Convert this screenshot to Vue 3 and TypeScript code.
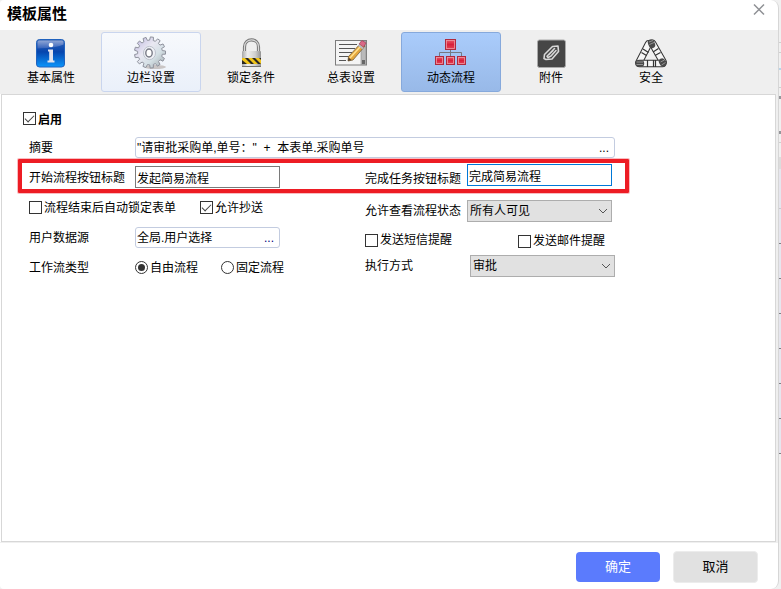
<script setup lang="ts">
import { ref } from 'vue'

interface Tab {
  id: string
  label: string
}

const tabs: Tab[] = [
  { id: 'basic', label: '基本属性' },
  { id: 'sidebar', label: '边栏设置' },
  { id: 'lock', label: '锁定条件' },
  { id: 'summary', label: '总表设置' },
  { id: 'flow', label: '动态流程' },
  { id: 'attach', label: '附件' },
  { id: 'security', label: '安全' },
]

const active = ref('flow')
const hovered = ref('sidebar')

const enabled = ref(true)
const summary = ref('"请审批采购单,单号："  +  本表单.采购单号')
const startTitle = ref('发起简易流程')
const finishTitle = ref('完成简易流程')
const autoLock = ref(false)
const allowCopy = ref(true)
const visibility = ref('所有人可见')
const userSource = ref('全局.用户选择')
const smsNotice = ref(false)
const mailNotice = ref(false)
const flowType = ref('free')
const execMode = ref('审批')

// Outline of a cog: each tooth is a flat-topped bump between two radii.
function gearPath(cx: number, cy: number, outer: number, inner: number, teeth: number): string {
  const step = (Math.PI * 2) / teeth
  const points: string[] = []
  for (let i = 0; i < teeth; i++) {
    const a = i * step
    const corners: [number, number][] = [
      [inner, -0.32],
      [outer, -0.2],
      [outer, 0.22],
      [inner, 0.3],
    ]
    for (const [r, t] of corners) {
      points.push(`${(cx + r * Math.cos(a + t * step)).toFixed(2)} ${(cy + r * Math.sin(a + t * step)).toFixed(2)}`)
    }
  }
  return `M${points.join('L')}Z`
}

const gear = gearPath(16, 16.5, 15.6, 12.4, 13)
const rowTicks = [243, 278, 313, 348, 383, 418, 453]
</script>

<template>
  <div class="desktop" lang="zh-CN">
    <div class="dialog" role="dialog" aria-labelledby="dialog-title">
      <header class="titlebar">
        <h1 id="dialog-title">模板属性</h1>
        <button class="close" type="button" aria-label="关闭">
          <svg width="13" height="13" viewBox="0 0 13 13">
            <path d="M1 1.5 11 11.5M11 1.5 1 11.5" fill="none" stroke="#8f9195" stroke-width="1.5" />
          </svg>
        </button>
      </header>

      <nav class="tabs">
        <button
          v-for="tab in tabs"
          :key="tab.id"
          type="button"
          class="tab"
          :class="{ active: active === tab.id, hovered: hovered === tab.id }"
          @click="active = tab.id"
          @mouseenter="hovered = tab.id"
        >
          <svg class="tab-icon" viewBox="0 0 34 34" aria-hidden="true">
            <template v-if="tab.id === 'basic'">
              <defs>
                <linearGradient id="infoBg" x1="0" y1="0" x2="0" y2="1">
                  <stop offset="0" stop-color="#3565b4" />
                  <stop offset="0.45" stop-color="#0645ae" />
                  <stop offset="1" stop-color="#0b96fb" />
                </linearGradient>
                <linearGradient id="infoGloss" x1="0" y1="0" x2="0" y2="1">
                  <stop offset="0" stop-color="#a7b6de" />
                  <stop offset="1" stop-color="#3b66bd" />
                </linearGradient>
              </defs>
              <rect x="2.5" y="3.5" width="28" height="27.5" rx="3" fill="url(#infoBg)" stroke="#2162bd" />
              <path d="M5 4.5H28Q29.5 4.5 29.5 6V8.5Q23 12 3.5 12.5V6Q3.5 4.5 5 4.5Z" fill="url(#infoGloss)" opacity="0.8" />
              <circle cx="17" cy="9" r="2.3" fill="#fff" />
              <path d="M14 13.5H19V24.5H20.5V26.5H13.5V24.5H15.2V15.5H14Z" fill="#e4e4ed" />
            </template>

            <template v-else-if="tab.id === 'sidebar'">
              <defs>
                <linearGradient id="gearFill" x1="0" y1="0" x2="1" y2="1">
                  <stop offset="0" stop-color="#bcb5df" />
                  <stop offset="0.4" stop-color="#e9e8f2" />
                  <stop offset="0.65" stop-color="#d4e0e5" />
                  <stop offset="1" stop-color="#9ea5aa" />
                </linearGradient>
              </defs>
              <ellipse cx="21" cy="31" rx="11" ry="2" fill="#c9c5c5" />
              <path :d="gear" fill="url(#gearFill)" stroke="#8f929d" stroke-width="1" />
              <ellipse cx="15.5" cy="17" rx="6" ry="6.6" fill="#eff1f6" stroke="#bcc1cc" stroke-width="1" />
              <ellipse cx="15" cy="17" rx="3.2" ry="4" fill="#fff" stroke="#777985" stroke-width="1.4" />
            </template>

            <template v-else-if="tab.id === 'lock'">
              <defs>
                <linearGradient id="lockBody" x1="0" y1="0" x2="1" y2="0">
                  <stop offset="0" stop-color="#a7a7a7" />
                  <stop offset="0.3" stop-color="#efefef" />
                  <stop offset="0.7" stop-color="#cfcfcf" />
                  <stop offset="1" stop-color="#929292" />
                </linearGradient>
              </defs>
              <path d="M10.5 17V11C10.5 1.5 24.5 1.5 24.5 11V17" fill="none" stroke="#777" stroke-width="3.2" />
              <path d="M10.5 17V11C10.5 1.5 24.5 1.5 24.5 11V17" fill="none" stroke="#d9d9d9" stroke-width="1.2" />
              <rect x="8" y="15" width="19" height="16" rx="1" fill="url(#lockBody)" />
              <path d="M8 30.5H27" stroke="#737373" />
              <rect x="8" y="22" width="19" height="6" fill="#292724" />
              <path d="M8 22H11L17 28H13L8 24ZM14 22H18L24 28H20ZM21 22H25L27 24V28Z" fill="#f0c51b" />
            </template>

            <template v-else-if="tab.id === 'summary'">
              <rect x="1.5" y="4.5" width="31" height="24.5" fill="#f4f4f4" stroke="#7c7c7c" />
              <rect x="27" y="5" width="5" height="23.5" fill="#bababa" stroke="#8b8b8b" stroke-width="0.6" />
              <path d="M28 24H31V28H28Z" fill="#666" />
              <path d="M5 8.5H23M5 12.5H21M5 16.5H18M5 20.5H15M5 24.5H12" stroke="#555" />
              <path d="M27 7 31 10 19 24 14 25 14.5 20.5Z" fill="#e4a63c" stroke="#74603f" stroke-width="0.8" />
              <path d="M26 11 16 22" stroke="#ffe08e" stroke-width="1.5" />
              <path d="M25 8 28 4.5 32 7 29.5 11Z" fill="#db6987" stroke="#9e435a" stroke-width="0.7" />
              <path d="M24.5 9 29 12.5" stroke="#b9bac4" stroke-width="2" />
              <path d="M14 25 14.5 21.5 17.5 24Z" fill="#54402c" />
            </template>

            <template v-else-if="tab.id === 'flow'">
              <defs>
                <linearGradient id="nodeFill" x1="0" y1="0" x2="0" y2="1">
                  <stop offset="0" stop-color="#ea5f70" />
                  <stop offset="0.5" stop-color="#d8203a" />
                  <stop offset="1" stop-color="#e5465a" />
                </linearGradient>
              </defs>
              <path d="M16.5 13V21M5.5 21V16.5H27.5V21" fill="none" stroke="#747983" />
              <rect x="11.5" y="3.5" width="10" height="10" fill="url(#nodeFill)" stroke="#b02a3e" />
              <rect x="12.5" y="4.5" width="8" height="8" fill="none" stroke="#ee98a2" stroke-width="0.8" />
              <g v-for="x in [1.5, 12.5, 23.5]" :key="x">
                <rect :x="x" y="20.5" width="8" height="8" fill="url(#nodeFill)" stroke="#b02a3e" />
                <rect :x="x + 1" y="21.5" width="6" height="6" fill="none" stroke="#ee98a2" stroke-width="0.8" />
              </g>
            </template>

            <template v-else-if="tab.id === 'attach'">
              <rect x="3.5" y="4" width="28" height="27.5" rx="2" fill="#464646" stroke="#a9a9a9" />
              <path
                d="M12 23.5 18 23 24.5 15.5 24 10 18.5 10.5 10.5 18.5 10 22.5 12 23.5M20.5 12.5 13 20.2 14 21.5 17 20 22 14.5M19 14.5 15 18.5"
                fill="none"
                stroke="#d8d8d8"
                stroke-width="1.6"
                stroke-linejoin="round"
                stroke-linecap="round"
              />
            </template>

            <template v-else>
              <g fill="none" stroke-linecap="round">
                <path d="M5 26.5 14.5 8" stroke="#333" stroke-width="7.6" />
                <path d="M5 26.5 14.5 8" stroke="#f6f6f6" stroke-width="5.6" />
                <path d="M18.5 7.5 29 26" stroke="#333" stroke-width="7.6" />
                <path d="M18.5 7.5 29 26" stroke="#f6f6f6" stroke-width="5.6" />
                <path d="M5.5 27.5H28.5" stroke="#333" stroke-width="7.6" />
                <path d="M5.5 27.5H28.5" stroke="#f6f6f6" stroke-width="5.6" />
                <path d="M17 6.5 18 9" stroke="#4a4a4a" stroke-width="6.4" />
                <path d="M4.5 27.5H7" stroke="#4a4a4a" stroke-width="6.4" />
                <path d="M28 25.5 29.2 27.5" stroke="#4a4a4a" stroke-width="6.4" />
              </g>
              <path
                d="M9 13 14.5 16.5M7.5 16.5 12.5 19.5M19 16 24.5 12.5M21 19.5 26.5 16.5M13.5 24V31M19.5 24V31M21.5 24V31"
                fill="none"
                stroke="#333"
                stroke-width="1.2"
              />
              <path
                d="M15 6 19 4.5M15.5 8.5 20 6.5M2.5 26H9M2.5 28.5H9M26.5 26 30.5 24M27.5 29 31.5 26.5"
                fill="none"
                stroke="#b5b5b5"
                stroke-width="0.7"
              />
            </template>
          </svg>
          <span>{{ tab.label }}</span>
        </button>
      </nav>

      <main class="panel">
        <form id="flow-form" class="form" @submit.prevent>
          <div class="enable-row">
            <label class="option strong"><input v-model="enabled" type="checkbox" /><span>启用</span></label>
          </div>

          <div class="row">
            <label class="caption" for="summary">摘要</label>
            <div class="picker wide">
              <input id="summary" v-model="summary" type="text" />
              <button type="button" aria-label="编辑摘要">...</button>
            </div>
          </div>

          <div class="columns">
            <div class="highlight" aria-hidden="true"></div>
            <div class="left">
              <div class="row">
                <label class="caption" for="start-title">开始流程按钮标题</label>
                <input id="start-title" v-model="startTitle" class="textbox" type="text" />
              </div>
              <div class="row">
                <label class="option lock-option"><input v-model="autoLock" type="checkbox" /><span>流程结束后自动锁定表单</span></label>
                <label class="option"><input v-model="allowCopy" type="checkbox" /><span>允许抄送</span></label>
              </div>
              <div class="row">
                <label class="caption" for="user-source">用户数据源</label>
                <div class="picker">
                  <input id="user-source" v-model="userSource" type="text" />
                  <button class="navy" type="button" aria-label="选择用户数据源">...</button>
                </div>
              </div>
              <div class="row" role="radiogroup" aria-labelledby="flow-type">
                <span id="flow-type" class="caption">工作流类型</span>
                <label class="option radio-option"><input v-model="flowType" type="radio" name="flow-type" value="free" /><span>自由流程</span></label>
                <label class="option"><input v-model="flowType" type="radio" name="flow-type" value="fixed" /><span>固定流程</span></label>
              </div>
            </div>

            <div class="right">
              <div class="pair finish">
                <label for="finish-title">完成任务按钮标题</label>
                <input id="finish-title" v-model="finishTitle" class="textbox focused" type="text" />
              </div>
              <div class="pair">
                <label for="visibility">允许查看流程状态</label>
                <div class="dropdown">
                  <select id="visibility" v-model="visibility">
                    <option>所有人可见</option>
                  </select>
                  <svg viewBox="0 0 10 6" aria-hidden="true"><path d="M1 1 5 5 9 1" /></svg>
                </div>
              </div>
              <div class="notices">
                <label class="option"><input v-model="smsNotice" type="checkbox" />发送短信提醒</label>
                <label class="option mail"><input v-model="mailNotice" type="checkbox" />发送邮件提醒</label>
              </div>
              <div class="pair exec">
                <label for="exec-mode">执行方式</label>
                <div class="dropdown">
                  <select id="exec-mode" v-model="execMode">
                    <option>审批</option>
                  </select>
                  <svg viewBox="0 0 10 6" aria-hidden="true"><path d="M1 1 5 5 9 1" /></svg>
                </div>
              </div>
            </div>
          </div>
        </form>
      </main>

      <footer class="actions">
        <button class="confirm" type="submit" form="flow-form">确定</button>
        <button class="cancel" type="button">取消</button>
      </footer>
    </div>

    <svg class="backdrop" aria-hidden="true">
      <rect y="157" width="2" height="12" fill="#dcdcdc" />
      <rect y="169" width="2" height="284" fill="#e6e6ee" />
      <rect y="42" width="2" height="1" fill="#cfcfcf" />
      <rect y="52" width="2" height="1" fill="#cfcfcf" />
      <rect y="68" width="2" height="2" fill="#b8d4ea" />
      <rect y="87" width="2" height="1" fill="#cfcfcf" />
      <rect y="96" width="2" height="3" fill="#96969a" />
      <rect y="131" width="2" height="3" fill="#96969a" />
      <rect y="142" width="2" height="1" fill="#cfcfcf" />
      <rect y="208" width="2" height="1" fill="#c8c8cc" />
      <rect v-for="y in rowTicks" :key="y" :y="y" width="2" height="1" fill="#808084" />
    </svg>
  </div>
</template>

<style>
body {
  margin: 0;
  background: #f0f0f0;
}
</style>

<style scoped>
.desktop,
.desktop * {
  box-sizing: border-box;
}
.desktop {
  display: flex;
  min-height: 100vh;
  background: #f0f0f0;
  color: #000;
  font: 12px/14px 'Liberation Sans', 'Noto Sans CJK SC', sans-serif;
}
button,
input,
select {
  margin: 0;
  color: inherit;
  font: inherit;
}
.dialog {
  flex: 1;
  min-width: 0;
  display: flex;
  flex-direction: column;
  overflow: hidden;
  background: #fff;
  border-right: 1px solid #d6d6d6;
  border-radius: 4px 8px 8px 4px;
}
.backdrop {
  flex: none;
  width: 2px;
  align-self: stretch;
  height: auto;
}
.titlebar {
  display: flex;
  align-items: flex-start;
  justify-content: space-between;
  height: 30px;
  padding: 3px 12px 0 7px;
}
h1 {
  margin: 0;
  font-size: 15px;
  line-height: 22px;
  font-weight: 700;
}
.close {
  display: flex;
  padding: 0;
  border: 0;
  background: none;
}
.tabs {
  display: flex;
  padding: 2px 0 2px 1px;
  background: #efefef;
}
.tab {
  display: flex;
  flex-direction: column;
  align-items: center;
  gap: 1px;
  width: 100px;
  height: 60px;
  padding: 3px 0 0;
  border: 1px solid transparent;
  border-radius: 3px;
  background: none;
}
.tab-icon {
  width: 34px;
  height: 34px;
}
.tab.hovered {
  border-color: #c9d5ee;
  background: linear-gradient(#f7f9fc, #eaf0fa);
}
.tab.active {
  border-color: #86a9dc;
  background: linear-gradient(#aaccfb, #98b9e8);
}
.panel {
  flex: 1;
  display: flex;
  padding-left: 1px;
  border-right: 2px solid #efefef;
  border-bottom: 1px solid #efefef;
}
.form {
  flex: 1;
  min-width: 0;
  padding: 10px 0 10px 27px;
  border: 1px solid #d7d7d7;
}
.enable-row {
  display: flex;
  align-items: center;
  height: 27px;
  margin-left: -6px;
}
.row {
  display: flex;
  align-items: center;
  height: 30px;
}
.caption {
  flex: none;
  width: 106px;
  padding-top: 2px;
}
.columns {
  position: relative;
  display: flex;
}
.left {
  width: 336px;
}
.right {
  width: 250px;
  display: grid;
  grid-template-rows: 30px 38px 20px 32px;
}
.highlight {
  position: absolute;
  z-index: 1;
  top: -3px;
  left: -11px;
  width: 611px;
  height: 34px;
  border: 4px solid #ed1c24;
  border-radius: 1px;
  box-shadow: 0 0 0 1px #f9bcc0;
  pointer-events: none;
}
.textbox {
  width: 145px;
  height: 22px;
  padding: 0 1px;
  border: 1px solid #7a7a7a;
  border-radius: 0;
  outline: none;
  background: #fff;
}
.textbox.focused {
  border-color: #0078d7;
}
.picker {
  display: flex;
  width: 145px;
  height: 21px;
  border: 1px solid #c3cce0;
  border-radius: 3px;
  background: #fff;
}
.picker.wide {
  width: 480px;
}
.picker input {
  flex: 1;
  min-width: 0;
  padding: 1px 1px 0;
  border: 0;
  outline: none;
  background: none;
}
.picker button {
  padding: 2px 5px 0 0;
  border: 0;
  background: none;
}
.picker .navy {
  color: #00007a;
}
.option {
  display: flex;
  align-items: center;
  gap: 2px;
  white-space: nowrap;
}
.option span {
  padding-top: 2px;
}
.strong {
  font-weight: 700;
}
.lock-option {
  width: 171px;
}
.radio-option {
  width: 86px;
}
input[type='checkbox'],
input[type='radio'] {
  appearance: none;
  display: grid;
  place-items: center;
  width: 13px;
  height: 13px;
  border: 1px solid #333;
  background: #fff;
}
input[type='radio'] {
  border-radius: 50%;
}
input[type='checkbox']:checked::after {
  content: '';
  width: 8px;
  height: 4px;
  border: solid #444;
  border-width: 0 0 1px 1px;
  transform: translateY(-1px) rotate(-45deg);
}
input[type='radio']:checked::after {
  content: '';
  width: 7px;
  height: 7px;
  border-radius: 50%;
  background: #333;
}
.pair {
  display: grid;
  grid-template-columns: 102px 145px;
  align-items: center;
}
.pair.finish {
  align-items: start;
  padding-top: 2px;
}
.pair.finish label {
  padding-top: 8px;
}
.pair.exec {
  grid-template-columns: 105px 145px;
}
.notices {
  display: flex;
  align-items: center;
}
.notices .option {
  width: 153px;
}
.notices .mail {
  width: auto;
  padding-top: 2px;
}
.dropdown {
  display: grid;
  align-items: center;
}
.dropdown select,
.dropdown svg {
  grid-area: 1 / 1;
}
.dropdown select {
  appearance: none;
  width: 100%;
  height: 22px;
  padding: 0 22px 0 2px;
  border: 1px solid #adadad;
  border-radius: 0;
  background: #e1e1e1;
}
.dropdown svg {
  justify-self: end;
  width: 10px;
  height: 6px;
  margin-right: 4px;
  fill: none;
  stroke: #555;
  pointer-events: none;
}
.actions {
  display: flex;
  align-items: center;
  justify-content: flex-end;
  gap: 13px;
  padding: 8px 20px 6px;
}
.actions button {
  font-size: 13px;
  border-radius: 4px;
}
.confirm {
  width: 84px;
  height: 30px;
  border: 0;
  background: #5b7bfd;
}
.actions .confirm {
  color: #fff;
}
.cancel {
  width: 85px;
  height: 32px;
  border: 1px solid #ececec;
  background: #e1e1e1;
}
</style>
